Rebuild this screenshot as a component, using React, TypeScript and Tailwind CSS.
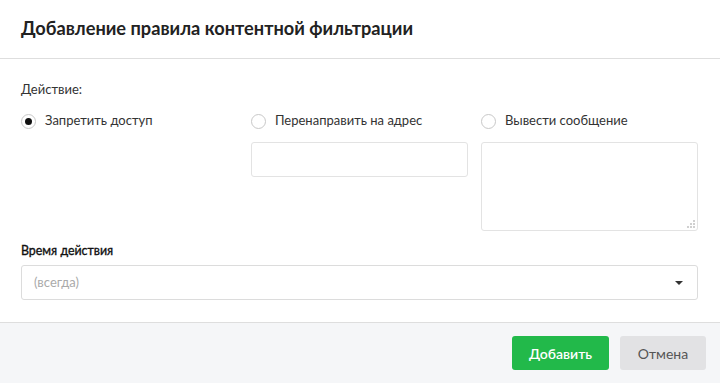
import React from "react";

function Radio({ checked, label }: { checked?: boolean; label: string }) {
  return (
    <div className="flex items-center gap-[9px] h-[20px]">
      <span className="w-[15px] h-[15px] rounded-full border border-[#c8c8c8] bg-white flex items-center justify-center shrink-0">
        {checked && <span className="w-[7px] h-[7px] rounded-full bg-[#111]" />}
      </span>
      <span className="text-[13px] text-[#333]">{label}</span>
    </div>
  );
}

function Grip() {
  const dots = [
    [6, 0],
    [3, 3], [6, 3],
    [0, 6], [3, 6], [6, 6],
  ];
  return (
    <svg className="absolute right-[3px] bottom-[3px]" width="8" height="8" viewBox="0 0 8 8">
      {dots.map(([x, y], i) => (
        <rect key={i} x={x} y={y} width="2" height="2" fill="#d0d0d0" />
      ))}
    </svg>
  );
}

export default function App() {
  return (
    <div className="w-[720px] h-[383px] bg-white flex flex-col overflow-hidden" style={{ fontFamily: "Lato, 'Open Sans', sans-serif" }}>
      <div className="h-[59px] border-b border-[#dedede] flex items-center px-[21px] shrink-0">
        <h1 className="text-[18.2px] font-bold text-[#222] leading-none pb-[1px]">Добавление правила контентной фильтрации</h1>
      </div>
      <div className="flex-1 px-[21px] pr-[22px] pt-[22px]">
        <div className="text-[13px] text-[#333] leading-[16px]">Действие:</div>
        <div className="grid grid-cols-3 gap-x-[13px] mt-[14px]">
          <div>
            <Radio checked label="Запретить доступ" />
          </div>
          <div>
            <Radio label="Перенаправить на адрес" />
            <input className="mt-[11px] w-full h-[35px] border border-[#e3e3e3] rounded-[3px] outline-none px-2 text-[13px] block" />
          </div>
          <div>
            <Radio label="Вывести сообщение" />
            <div className="relative mt-[11px]">
              <textarea className="w-full h-[89px] border border-[#e3e3e3] rounded-[3px] outline-none px-2 text-[13px] block resize-none" />
              <Grip />
            </div>
          </div>
        </div>
        <div className="mt-[12px] text-[12.4px] font-normal text-[#111] leading-[16px] [-webkit-text-stroke:0.35px_#111]">Время действия</div>
        <div className="mt-[6px] h-[35px] border border-[#dcdcdc] rounded-[3px] flex items-center justify-between pl-[12px] pr-[14px]">
          <span className="text-[13px] text-[#aaa]">(всегда)</span>
          <span className="w-0 h-0 border-l-[4px] border-r-[4px] border-t-[4px] border-l-transparent border-r-transparent border-t-[#333]" />
        </div>
      </div>
      <div className="h-[61px] shrink-0 border-t border-[#dedede] bg-[#f5f6f8] flex items-center justify-end gap-[11px] pr-[14px]">
        <button className="h-[34px] w-[97px] rounded-[3px] bg-[#22b94a] text-white text-[14px] font-semibold">Добавить</button>
        <button className="h-[34px] w-[86px] rounded-[3px] bg-[#e2e2e4] text-[#555] text-[14px]">Отмена</button>
      </div>
    </div>
  );
}
